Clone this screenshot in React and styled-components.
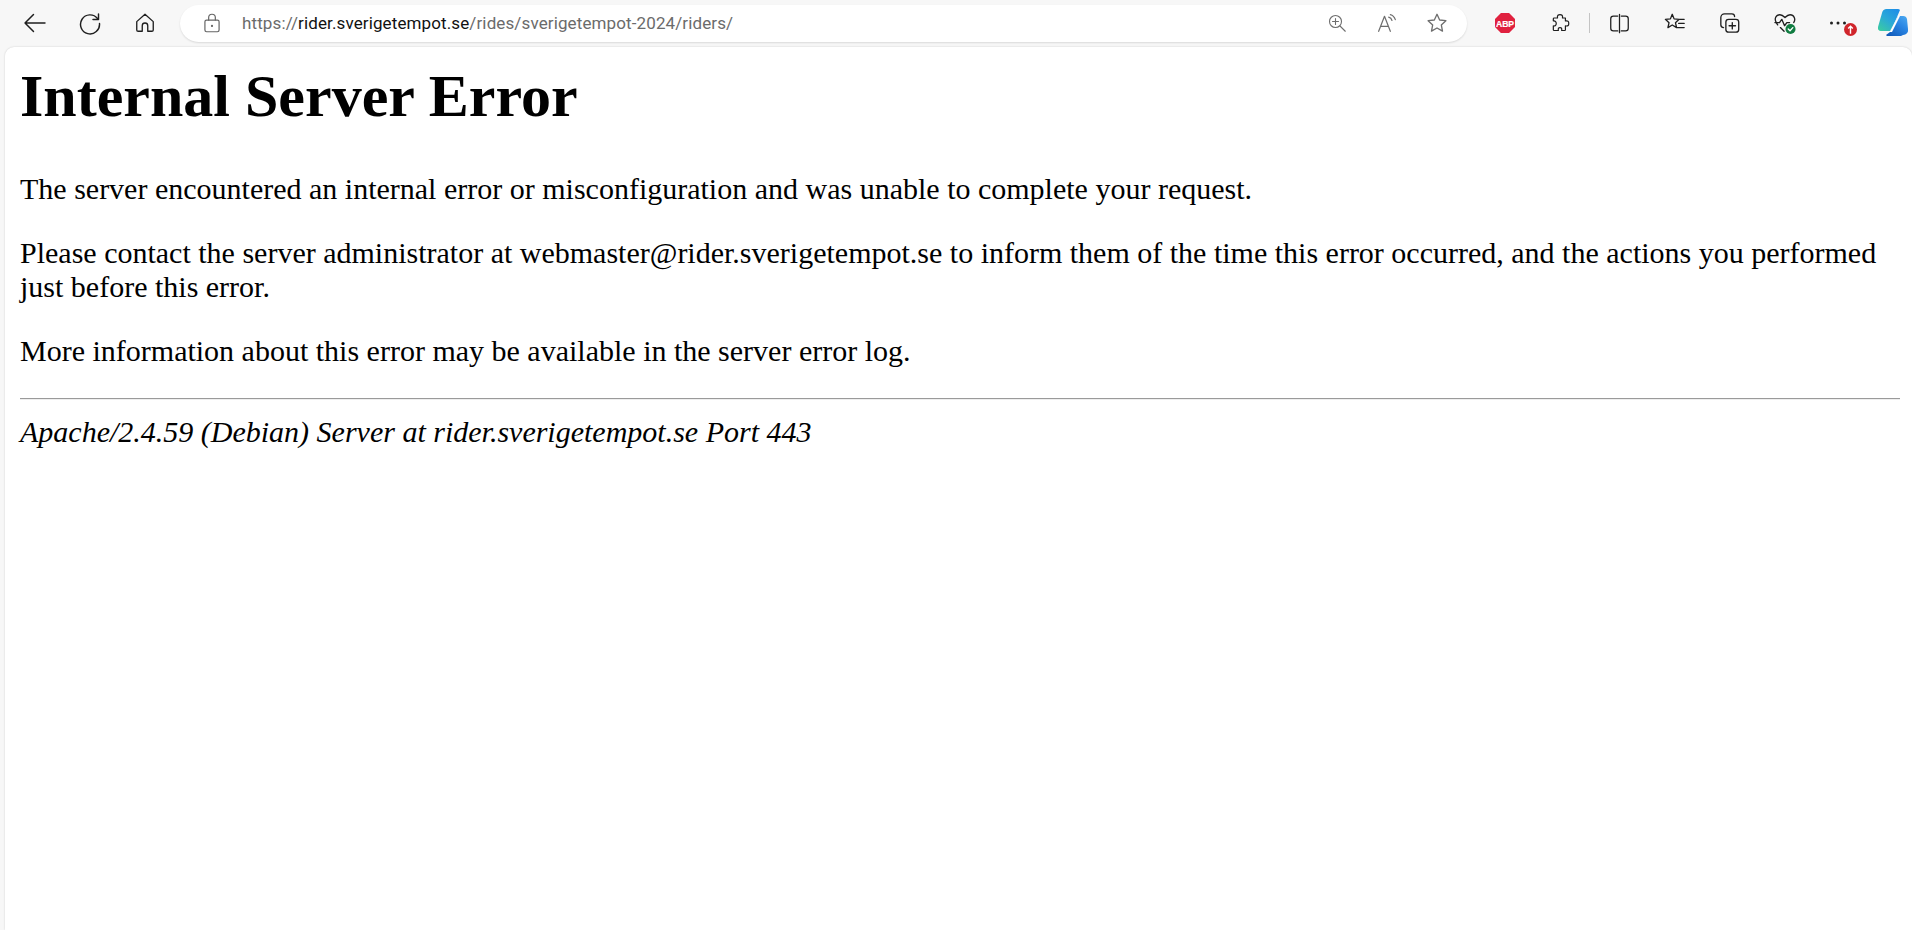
import React from "react"
import styled, { createGlobalStyle } from "styled-components"

const GlobalStyle = createGlobalStyle`
  html, body {
    margin: 0;
    height: 100%;
    background: #f7f7f7;
    overflow: hidden;
  }
  #root {
    height: 100%;
  }
`

const Browser = styled.div`
  display: flex;
  flex-direction: column;
  height: 930px;
  background: #f7f7f7;
`

const Toolbar = styled.div`
  display: flex;
  align-items: center;
  height: 46px;
  padding: 0 4px 1px 7px;
  flex-shrink: 0;
`

const ToolButton = styled.div`
  position: relative;
  display: flex;
  align-items: center;
  justify-content: center;
  flex-shrink: 0;
  width: ${p => p.$w || 55}px;
  height: 36px;
  color: ${p => p.$color || "#1f1f1f"};
`

const CopilotButton = styled(ToolButton)`
  justify-content: flex-end;
`

const AddressBar = styled.div`
  display: flex;
  align-items: center;
  flex: 1;
  height: 37px;
  margin: 0 10px 0 8px;
  padding: 0 5px 0 22px;
  background: #fff;
  border-radius: 19px;
  box-shadow: 0 1px 2px rgba(0, 0, 0, 0.12);
`

const Url = styled.div`
  flex: 1;
  margin-left: 20px;
  font-family: Roboto, "Open Sans", sans-serif;
  font-size: 17px;
  letter-spacing: 0.12px;
  color: #6b6b6b;
  white-space: nowrap;
`

const Host = styled.span`
  color: #111;
`

const BarIcon = styled.div`
  display: flex;
  justify-content: center;
  width: 50px;
  color: #6e6e6e;
`

const Separator = styled.div`
  flex-shrink: 0;
  width: 1px;
  height: 20px;
  margin: 0 3px 0 2px;
  background: #c4c4c4;
`

const Badge = styled.div`
  position: absolute;
  left: 29px;
  top: 18px;
  display: flex;
  width: 13px;
  height: 13px;
  border-radius: 50%;
  background: #d0252b;
`

const Page = styled.main`
  flex: 1;
  margin-left: 5px;
  padding: 15px 12px 15px 15px;
  background: #fff;
  border-radius: 9px 9px 0 0;
  box-shadow: 0 0 2px rgba(0, 0, 0, 0.18);
  font-family: "Liberation Serif", "Times New Roman", serif;
  font-size: 30px;
  line-height: 34px;
  color: #000;
`

const Title = styled.h1`
  margin: 0 0 41px;
  font-size: 60px;
  line-height: 69px;
  font-weight: bold;
`

const Para = styled.p`
  margin: 0 0 30px;
`

const Rule = styled.hr`
  margin: 0 0 15px;
  height: 2px;
  border: 0;
  border-top: 1px solid #9a9a9a;
  border-bottom: 1px solid #eee;
  box-sizing: border-box;
`

const Footer = styled.address`
  font-style: italic;
`

const Line = ({ size = 24, children }) => (
  <svg width={size} height={size} viewBox="0 0 24 24" fill="none" stroke="currentColor" strokeWidth="1.45" strokeLinecap="round" strokeLinejoin="round">
    {children}
  </svg>
)

const App = () => (
  <Browser>
    <GlobalStyle />
    <Toolbar>
      <ToolButton>
        <Line>
          <path d="M22 12H2M10.500 3.500 2 12l8.500 8.500" />
        </Line>
      </ToolButton>
      <ToolButton>
        <Line>
          <path d="M20.500 3v5.500H15" />
          <path d="M19.500 7.500A9.500 9.500 0 1 0 21.500 12.500" />
        </Line>
      </ToolButton>
      <ToolButton>
        <Line size={22}>
          <path d="M3 10.500 12 2.500l9 8v9a1.500 1.500 0 0 1-1.500 1.500H15v-6a3 3 0 0 0-6 0v6H4.500A1.500 1.500 0 0 1 3 19.500z" />
        </Line>
      </ToolButton>
      <AddressBar>
        <ToolButton $w={20} $color="#666">
          <Line size={20}>
            <rect x="3.500" y="8.500" width="17" height="14" rx="2" />
            <path d="M8 8.500V5.500a4 4 0 0 1 8 0v3" />
            <circle cx="12" cy="15.500" r="0.600" fill="currentColor" />
          </Line>
        </ToolButton>
        <Url>
          https://<Host>rider.sverigetempot.se</Host>/rides/sverigetempot-2024/riders/
        </Url>
        <BarIcon>
          <Line size={18}>
            <circle cx="10" cy="10" r="8" />
            <path d="M16 16l7 7M10 6v8M6 10h8" />
          </Line>
        </BarIcon>
        <BarIcon>
          <Line size={20}>
            <path d="M2 22 9 4l7 18M4.500 16h9" />
            <path d="M14 5c2 .5 3.500 2 4 4M16 2c3 .8 5 3 6 6" />
          </Line>
        </BarIcon>
        <BarIcon>
          <Line size={22}>
            <path d="M12 2.500l2.900 6.200 6.800.8-5 4.600 1.300 6.700-6-3.300-6 3.300 1.300-6.700-5-4.600 6.800-.8z" />
          </Line>
        </BarIcon>
      </AddressBar>
      <ToolButton>
        <svg width="20" height="20" viewBox="0 0 22 22">
          <path d="M6.500 0h9L22 6.500v9L15.500 22h-9L0 15.500v-9z" fill="#e0213f" />
          <text x="11" y="15" textAnchor="middle" textLength="20" lengthAdjust="spacingAndGlyphs" fontFamily="Liberation Sans, sans-serif" fontSize="10.500" fontWeight="bold" fill="#fff" stroke="#fff" strokeWidth="0.25">ABP</text>
        </svg>
      </ToolButton>
      <ToolButton>
        <Line size={20}>
          <path d="M5 6H9C8.500 2.500 10 2 12 2s3.500.5 3 4h3.500v3.500C22 9 22.500 10.500 22.500 12.500s-.5 3.500-4 3V20a1 1 0 0 1-1 1H14c.5-3-.5-3.500-2-3.500s-2.500.5-2 3.500H5a1 1 0 0 1-1-1v-4.500c2.500.5 3.500-1.500 3.500-3S6.500 9 4 9.500V7a1 1 0 0 1 1-1z" />
        </Line>
      </ToolButton>
      <Separator />
      <ToolButton $w={52}>
        <Line size={21}>
          <path d="M10 3.500H5A3 3 0 0 0 2 6.500v11a3 3 0 0 0 3 3h5M14 3.500h5a3 3 0 0 1 3 3v11a3 3 0 0 1-3 3h-5M12 1.500v21" />
        </Line>
      </ToolButton>
      <ToolButton $w={60}>
        <Line size={22}>
          <path d="M9 2.500l2 5 5.500.5-4 3.700 1.200 5.300L9 14.200 4.300 17l1.200-5.300-4-3.700L7 7.500z" />
          <path d="M17 8h5M16 12.500h6M14.500 17H22" />
        </Line>
      </ToolButton>
      <ToolButton $w={50}>
        <Line size={22}>
          <rect x="7.500" y="8" width="14" height="14" rx="3" />
          <path d="M14.500 11.500v7M11 15h7" />
          <path d="M17 5a3 3 0 0 0-3-3H6a4 4 0 0 0-4 4v8a3 3 0 0 0 3 3" />
        </Line>
      </ToolButton>
      <ToolButton $w={60}>
        <svg width="22" height="22" viewBox="0 0 24 24" fill="none" stroke="currentColor" strokeWidth="1.450" strokeLinecap="round" strokeLinejoin="round">
          <path d="M4 14 2.500 11.500C0 7.500 2 3 6.500 3c2.500 0 4 1.500 5.500 3 1.500-1.500 3-3 5.500-3C22 3 24 8 21.500 11.500" />
          <path d="M1 11.500h5l2.500-3.500 3 7 2.500-3.500h3M7 17l4 4" />
          <circle cx="18" cy="18.500" r="5.500" fill="#107c41" stroke="none" />
          <path d="M15.500 18.500l2 2 3-3.500" stroke="#fff" />
        </svg>
      </ToolButton>
      <ToolButton $w={46}>
        <svg width="18" height="6" viewBox="0 0 18 6" fill="#1f1f1f">
          <circle cx="2.500" cy="3" r="1.500" />
          <circle cx="9" cy="3" r="1.500" />
          <circle cx="15.500" cy="3" r="1.500" />
        </svg>
        <Badge>
          <svg width="13" height="13" viewBox="0 0 14 14" fill="none" stroke="#fff" strokeWidth="1.500">
            <path d="M7 11.500V3.500M4.500 6 7 3.500 9.500 6" />
          </svg>
        </Badge>
      </ToolButton>
      <CopilotButton $w={47}>
        <svg width="30" height="28" viewBox="0 0 30 28">
          <defs>
            <linearGradient id="cpA" x1="0" y1="1" x2="0.8" y2="0">
              <stop offset="0" stopColor="#3ccf9c" />
              <stop offset="0.55" stopColor="#2aa8d8" />
              <stop offset="1" stopColor="#1e8fe6" />
            </linearGradient>
            <linearGradient id="cpB" x1="0.1" y1="1" x2="0.9" y2="0">
              <stop offset="0" stopColor="#1058b8" />
              <stop offset="0.6" stopColor="#2a86e4" />
              <stop offset="1" stopColor="#4aa8f0" />
            </linearGradient>
          </defs>
          <path d="M8 0H20a3 3 0 0 1 2 1L13 22H3a3 3 0 0 1-3-4L4 4a5 5 0 0 1 4-4z" fill="url(#cpA)" />
          <path d="M20 7h5a4 4 0 0 1 4 3l1 10a5 5 0 0 1-5 6l-2 1H9a3 3 0 0 1-1-1l4-3z" fill="url(#cpB)" />
          <path d="M20 7h2l-8 16h-2.500z" fill="#fff" />
        </svg>
      </CopilotButton>
    </Toolbar>
    <Page>
      <Title>Internal Server Error</Title>
      <Para>The server encountered an internal error or misconfiguration and was unable to complete your request.</Para>
      <Para>Please contact the server administrator at webmaster@rider.sverigetempot.se to inform them of the time this error occurred, and the actions you performed just before this error.</Para>
      <Para>More information about this error may be available in the server error log.</Para>
      <Rule />
      <Footer>Apache/2.4.59 (Debian) Server at rider.sverigetempot.se Port 443</Footer>
    </Page>
  </Browser>
)

export default App
